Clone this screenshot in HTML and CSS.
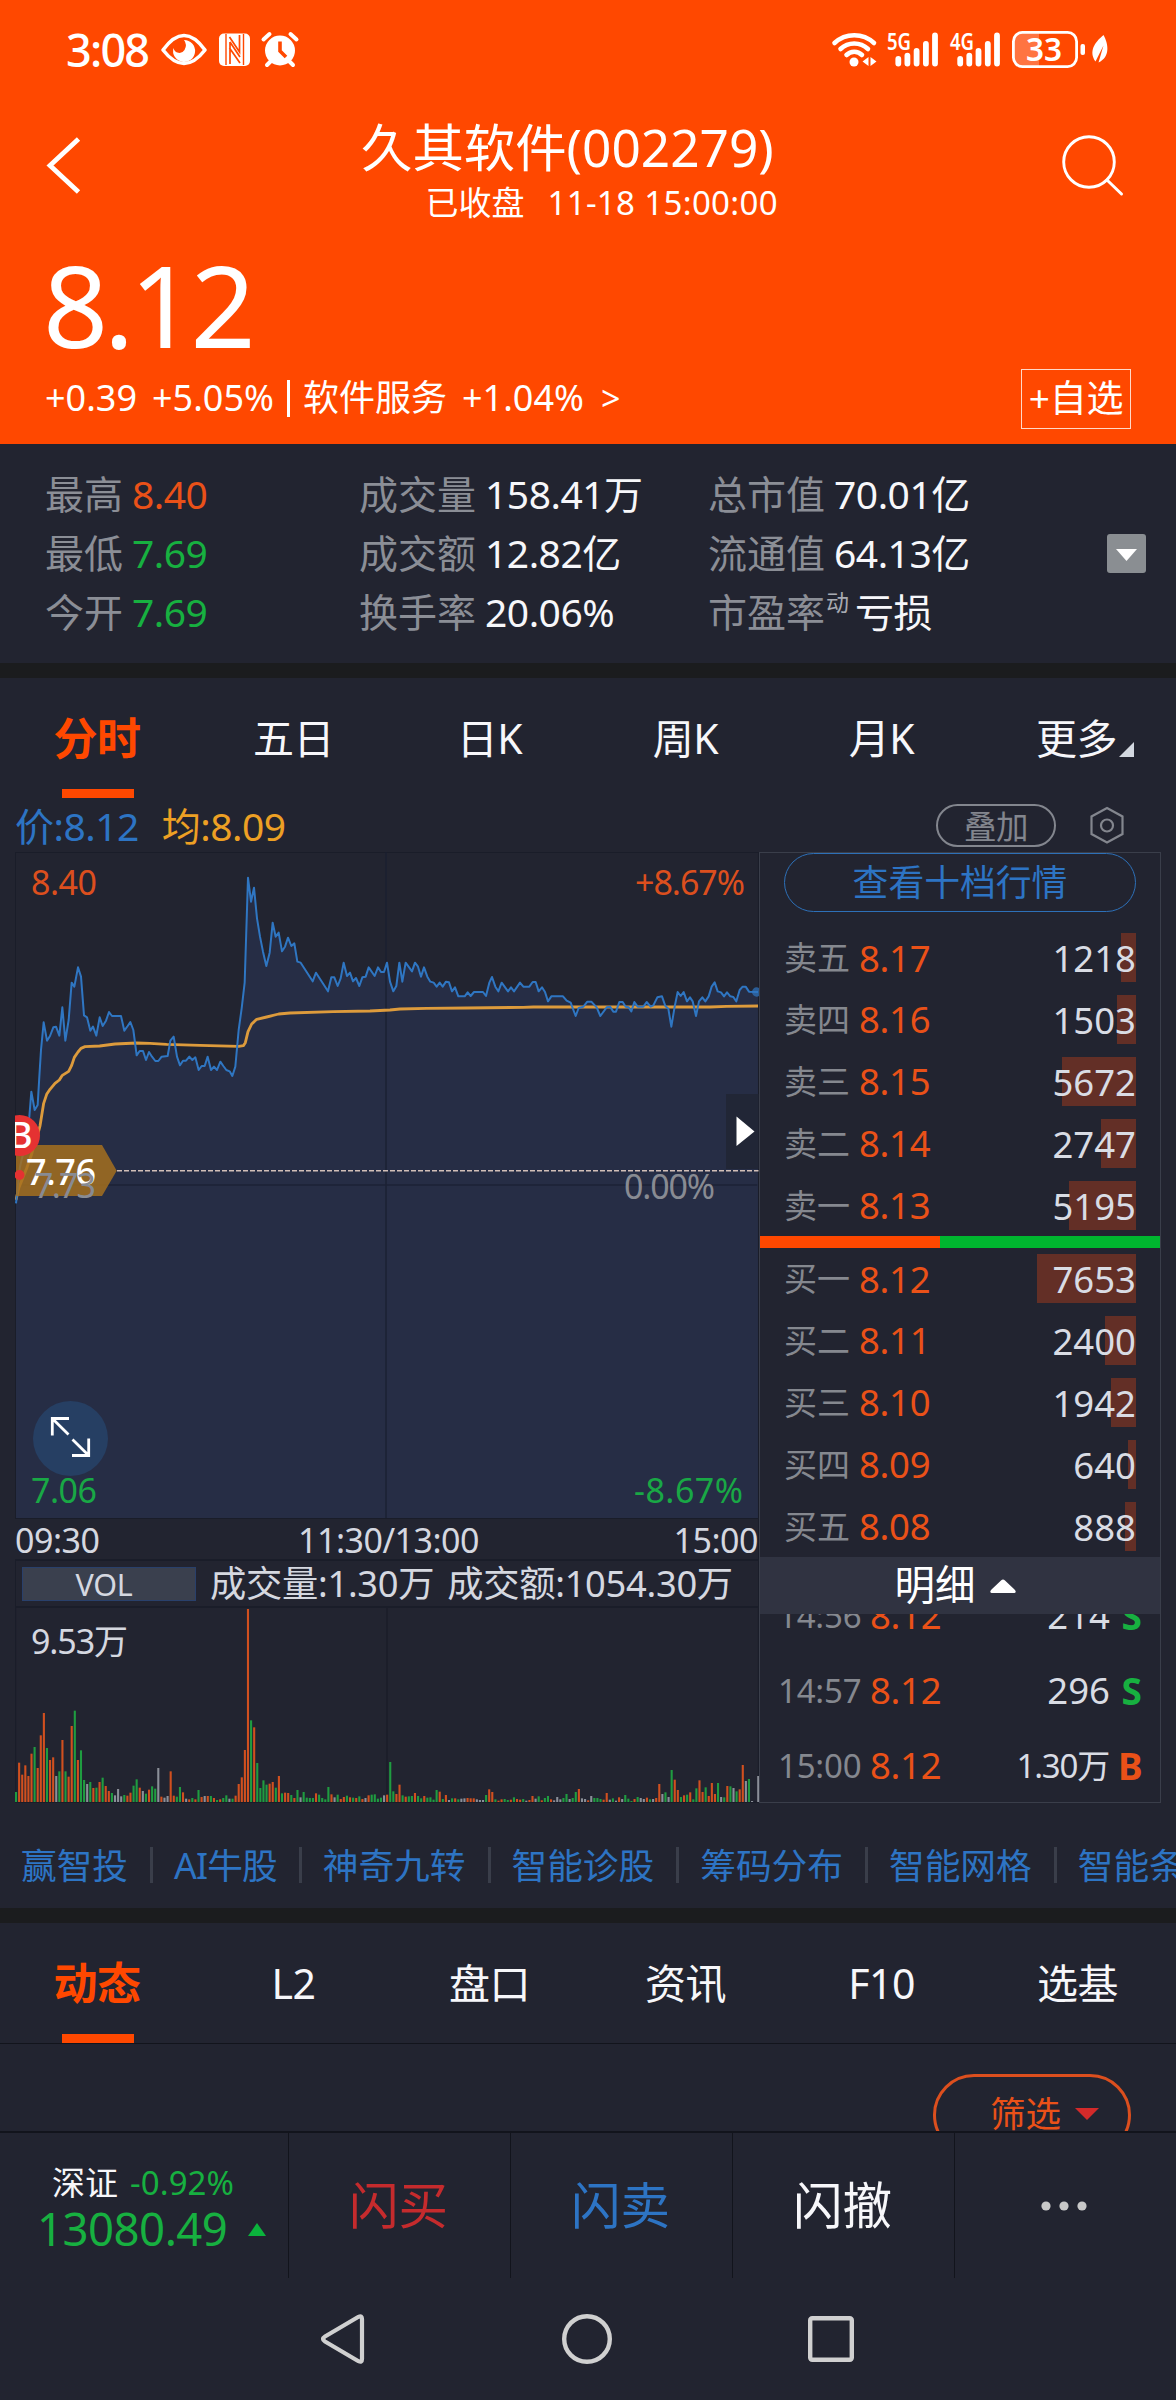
FILE: index.html
```html
<!DOCTYPE html>
<html lang="zh-CN">
<head>
<meta charset="utf-8">
<title>久其软件(002279)</title>
<link rel="stylesheet" href="styles.css">
</head>
<body>
<div class="app">
  <header class="hero">
    <div class="status">
      <span class="clock">3:08</span>
      <svg class="status-left" width="140" height="40" viewBox="160 30 140 40">
        <path d="M163 50Q184 21 205 50Q184 77 163 50Z" fill="none" stroke="#fff" stroke-width="3.6" stroke-linejoin="round"/>
        <path d="M184 40a11 11 0 1 1-10.500 8a6 6 0 0 0 11 2a9 9 0 0 0-0.500-10Z" fill="#fff"/>
        <rect x="219" y="33.500" width="31" height="32.500" rx="5" fill="#fff"/>
        <path d="M226 34v31M243.500 34v31" stroke="#ff4800" stroke-width="1.400"/>
        <path d="M229.500 37l10 15v-17M240 63l-10.500-15M230 42v22M230 42l10 15" fill="none" stroke="#ff4800" stroke-width="1.700"/>
        <circle cx="280" cy="50.500" r="15" fill="#fff"/>
        <path d="M263.500 39.500l6-5.500M296.500 39.500l-6-5.500M271 61l-4 4M289 61l4 4" stroke="#fff" stroke-width="4" stroke-linecap="round"/>
        <path d="M280 41.500v9.500l6 6" fill="none" stroke="#ff4800" stroke-width="3.600"/>
      </svg>
      <svg class="status-right" width="280" height="40" viewBox="830 30 280 40">
        <g fill="none" stroke="#fff" stroke-width="4.600" stroke-linecap="round">
          <path d="M834.500 43a29 29 0 0 1 39.500 0M840.500 49a20 20 0 0 1 27.500 0M846.500 55a11 11 0 0 1 15.500 0"/>
        </g>
        <circle cx="854" cy="62" r="4.500" fill="#fff"/>
        <path d="M868.500 57v9l-6-4.500zM870.500 57v9l6-4.500z" fill="#fff"/>
        <g stroke="#fff" stroke-width="5.800" stroke-linecap="round">
          <path d="M898.300 59v4.500M907.400 55.600v7.900M916.600 51v12.500M925.900 44v19.500M935 35.500v28"/>
          <path d="M960.200 59v4.500M969.300 55.600v7.900M978.500 51v12.500M987.800 44v19.500M997 35.500v28"/>
        </g>
        <text x="887" y="50" class="net" textLength="24" lengthAdjust="spacingAndGlyphs">5G</text>
        <text x="950" y="50" class="net" textLength="24" lengthAdjust="spacingAndGlyphs">4G</text>
        <path d="M1022 33h17v33h-17a8 8 0 0 1-8-8v-17a8 8 0 0 1 8-8z" fill="#ff7441"/>
        <rect x="1013.400" y="32.400" width="63.200" height="34.200" rx="9" fill="none" stroke="#fff" stroke-width="2.800"/>
        <rect x="1080.500" y="44" width="4.500" height="11" rx="2" fill="#fff"/>
        <text x="1026" y="61" class="battery" textLength="36" lengthAdjust="spacingAndGlyphs">33</text>
        <path d="M1103.500 35c5 9 7 22-5 27.500l5-17-8 16c-7-10-1-19 8-26.500z" fill="#fff"/>
      </svg>
    </div>
    <div class="titlebar">
      <svg width="40" height="60" viewBox="44 135 40 60"><path d="M78.500 139L50 165.500L78.500 192" fill="none" stroke="#fff" stroke-width="4.800"/></svg>
      <div class="titles">
        <h1>久其软件(002279)</h1>
        <p><span>已收盘</span><span class="stamp">11-18 15:00:00</span></p>
      </div>
      <svg width="64" height="64" viewBox="1060 133 64 64"><circle cx="1089" cy="162" r="25.300" fill="none" stroke="#fff" stroke-width="2.900"/><path d="M1107 180l14.500 14" stroke="#fff" stroke-width="3" stroke-linecap="round"/></svg>
    </div>
    <div class="price">8.12</div>
    <div class="change">
      <span>+0.39</span><span class="pct">+5.05%</span><i class="bar"></i><span class="sector">软件服务</span><span class="sector-pct">+1.04%</span><span class="gt">&gt;</span>
      <button class="add">+自选</button>
    </div>
  </header>

  <section class="quote">
    <dl class="c1"><div><dt>最高</dt><dd class="up">8.40</dd></div><div><dt>最低</dt><dd class="down">7.69</dd></div><div><dt>今开</dt><dd class="down">7.69</dd></div></dl>
    <dl class="c2"><div><dt>成交量</dt><dd>158.41万</dd></div><div><dt>成交额</dt><dd>12.82亿</dd></div><div><dt>换手率</dt><dd>20.06%</dd></div></dl>
    <dl class="c3"><div><dt>总市值</dt><dd>70.01亿</dd></div><div><dt>流通值</dt><dd>64.13亿</dd></div><div><dt>市盈率<sup>动</sup></dt><dd class="tight">亏损</dd></div></dl>
    <svg class="more" width="39" height="39" viewBox="0 0 39 39"><rect width="39" height="39" rx="3" fill="#8a8e92"/><path d="M9 15h21L19.500 27z" fill="#fff"/></svg>
  </section>

  <nav class="tabs">
    <a class="on">分时</a><a>五日</a><a>日K</a><a>周K</a><a>月K</a><a class="with-corner">更多<svg width="15" height="15" viewBox="0 0 15 15"><path d="M15 0v15H0z" fill="#d3d8e0"/></svg></a>
  </nav>

  <div class="legend">
    <span class="blue">价:8.12</span><span class="amber">均:8.09</span>
    <span class="overlay">叠加</span>
    <svg width="36" height="42" viewBox="0 0 36 42"><path d="M18 4l15.500 8.500v17.500l-15.500 8.500l-15.500-8.500v-17.500z" fill="none" stroke="#83868e" stroke-width="2.200"/><circle cx="18" cy="21.500" r="6" fill="none" stroke="#83868e" stroke-width="2.200"/></svg>
  </div>

  <main class="market">
    <div class="charts">
      <svg class="minute" width="744" height="666" viewBox="15 852 744 666">
        <g transform="translate(0 830) scale(.333333)">
          <path id="area" fill="#262d45"/>
          <path d="M46 66V2064M46 67H2276M2276 66V2064" stroke="#1a1d29" stroke-width="4"/>
          <path d="M1158 66V2064M46 1065H2272" stroke="#1a1f30" stroke-width="5" opacity=".75"/>
          <path id="avg" fill="none" stroke="#dd9b3c" stroke-width="8.500" stroke-linejoin="round"/>
          <path id="line" fill="none" stroke="#2f76c2" stroke-width="6" stroke-linejoin="round"/>
          <circle cx="2270" cy="486" r="14" fill="#2f76c2" opacity=".7"/>
        </g>
        <path d="M726 1094h32.500v75H726z" fill="#212636"/>
        <path d="M736.500 1116.500v29.500L754.500 1131.500z" fill="#fff"/>
        <path d="M117 1170.700H758.500" stroke="#d2bfb8" stroke-width="1.400" stroke-dasharray="5 2"/>
        <path d="M16 1145H102L116.700 1170.700L102 1196H16z" fill="#a5701f" fill-opacity=".85"/>
        <circle cx="19.500" cy="1175" r="5" fill="#e53232"/>
        <circle cx="19.500" cy="1135.500" r="20.500" fill="#e53232"/>
        <text x="9" y="1148" class="mark">B</text>
        <text x="26" y="1185" class="cost" textLength="70">7.76</text>
        <text x="34" y="1198" class="axis mute" textLength="62">7.73</text>
        <text x="31" y="894.500" class="axis up" textLength="66">8.40</text>
        <text x="635" y="894.500" class="axis up" textLength="110">+8.67%</text>
        <text x="624" y="1198.500" class="axis mute" textLength="91">0.00%</text>
        <circle cx="70.500" cy="1438.500" r="37.500" fill="#263f63"/>
        <path d="M69 1418.500H52.300V1435.500M52.300 1418.500L68.500 1434.500M72 1455.500H88.700V1438.500M88.700 1455.500L72.500 1439.500" fill="none" stroke="#fff" stroke-width="2.800"/>
        <text x="31" y="1502.500" class="axis down" textLength="66">7.06</text>
        <text x="634" y="1502.500" class="axis down" textLength="109">-8.67%</text>
      </svg>
      <div class="times"><span>09:30</span><span>11:30/13:00</span><span>15:00</span></div>
      <div class="volbar"><b>VOL</b><span>成交量:1.30万</span><span>成交额:1054.30万</span></div>
      <svg class="volume" width="744" height="195" viewBox="15 1608 744 195">
        <path d="M15.500 1608V1803M387 1608V1802M758.500 1608V1803M15 1802.300H759" stroke="#1a1d29" stroke-width="1.400"/>
        <g id="bars"></g>
        <text x="31" y="1653.500" class="axis pale" textLength="97">9.53万</text>
      </svg>
    </div>
    <aside class="book">
      <div class="ten">查看十档行情</div>
      <ul class="levels">
        <li><em>卖五</em><b>8.17</b><span><i style="width:15px"></i>1218</span></li>
        <li><em>卖四</em><b>8.16</b><span><i style="width:19px"></i>1503</span></li>
        <li><em>卖三</em><b>8.15</b><span><i style="width:74px"></i>5672</span></li>
        <li><em>卖二</em><b>8.14</b><span><i style="width:35px"></i>2747</span></li>
        <li><em>卖一</em><b>8.13</b><span><i style="width:67px"></i>5195</span></li>
      </ul>
      <div class="ratio"><i></i></div>
      <ul class="levels">
        <li><em>买一</em><b>8.12</b><span><i style="width:99px"></i>7653</span></li>
        <li><em>买二</em><b>8.11</b><span><i style="width:31px"></i>2400</span></li>
        <li><em>买三</em><b>8.10</b><span><i style="width:25px"></i>1942</span></li>
        <li><em>买四</em><b>8.09</b><span><i style="width:8px"></i>640</span></li>
        <li><em>买五</em><b>8.08</b><span><i style="width:11px"></i>888</span></li>
      </ul>
      <div class="detail">明细<svg width="26" height="14" viewBox="0 0 26 14"><path d="M1.500 14Q-1 13 1.500 10.500L11 1.500Q13-.5 15 1.500L24.500 10.500Q27 13 24.500 14z" fill="#fff"/></svg></div>
      <ul class="trades">
        <li><em>14:56</em><b>8.12</b><span>214</span><strong class="down">S</strong></li>
        <li><em>14:57</em><b>8.12</b><span>296</span><strong class="down">S</strong></li>
        <li><em>15:00</em><b>8.12</b><span class="wan">1.30万</span><strong class="up">B</strong></li>
      </ul>
    </aside>
  </main>

  <nav class="links"><a>赢智投</a><a class="ai">AI牛股</a><a>神奇九转</a><a>智能诊股</a><a>筹码分布</a><a>智能网格</a><a>智能条件单</a></nav>

  <nav class="tabs news">
    <a class="on">动态</a><a>L2</a><a>盘口</a><a>资讯</a><a>F10</a><a>选基</a>
  </nav>

  <div class="filter"><div class="pill">筛选<svg width="24" height="12" viewBox="0 0 24 12"><path d="M0 0h24L12 12z" fill="#d42a2a"/></svg></div></div>

  <footer class="actions">
    <div class="index">
      <p><span>深证</span><span class="down">-0.92%</span></p>
      <p class="points down"><span>13080.49</span><svg width="18" height="13" viewBox="0 0 18 13"><path d="M9 0l9 13H0z" fill="#0bb33c"/></svg></p>
    </div>
    <a class="buy">闪买</a><a class="sell">闪卖</a><a>闪撤</a>
    <a><svg width="48" height="10" viewBox="0 0 48 10" fill="#c8c8c8"><circle cx="5" cy="5" r="4.600"/><circle cx="23" cy="5" r="4.600"/><circle cx="41" cy="5" r="4.600"/></svg></a>
  </footer>

  <div class="sysnav">
    <svg width="50" height="54" viewBox="0 0 50 54"><path d="M7 24.500L40.500 4.800Q44 3 44 7V47Q44 51 40.500 49.200L7 29.500Q3 27 7 24.500z" fill="none" stroke="#d0d0d0" stroke-width="4.200"/></svg>
    <svg width="50" height="54" viewBox="0 0 50 54"><circle cx="25" cy="27" r="22.800" fill="none" stroke="#d0d0d0" stroke-width="4.400"/></svg>
    <svg width="50" height="54" viewBox="0 0 50 54"><rect x="4.200" y="6.200" width="41.600" height="41.600" rx="2" fill="none" stroke="#d0d0d0" stroke-width="4.400"/></svg>
  </div>
</div>
<script src="chart.js"></script>
</body>
</html>
```
FILE: styles.css
```css
* { box-sizing: border-box; margin: 0; padding: 0; }

body {
  background: #222430;
  color: #f7f7fa;
  font-family: "Noto Sans", "Noto Sans CJK SC", sans-serif;
  font-size: 36px;
  line-height: 1;
}

svg { display: block; flex: none; }
ul { list-style: none; }
em, i { font-style: normal; }
.app { width: 1176px; height: 2400px; overflow: hidden; display: flex; flex-direction: column; }
.app > * { flex: none; }

.up { color: #ea5118; fill: #dc4f1e; }
.down { color: #17b040; fill: #19a845; }

/* header */
.hero { height: 444px; background: #ff4800; color: #fff; }
.status { height: 100px; padding: 0 66px; display: flex; align-items: center; }
.clock { width: 94px; font-size: 45px; letter-spacing: -1.800px; font-weight: 500; line-height: 100px; }
.status-right { margin-left: auto; overflow: visible; }
.net { font-size: 24px; font-weight: 600; fill: #fff; }
.battery { font-size: 33px; font-weight: 600; fill: #fff; }

.titlebar { height: 136px; padding: 0 52px 0 44px; display: flex; align-items: flex-start; }
.titlebar > svg { margin-top: 35px; }
.titlebar > svg:last-child { margin-top: 33px; margin-left: auto; }
.titles { width: 420px; margin-left: 277px; padding-top: 15px; }
.titles h1 { font-size: 51.400px; line-height: 64px; font-weight: 400; white-space: nowrap; }
.titles p { display: flex; justify-content: flex-end; gap: 23px; padding-right: 3px; margin-top: 6px; font-size: 33px; line-height: 36px; white-space: nowrap; }
.stamp { letter-spacing: .35px; }

.price { height: 134px; padding-left: 43px; font-size: 114px; line-height: 135px; letter-spacing: -4.500px; }
.change { height: 74px; padding: 0 45px; margin-top: -9px; display: flex; align-items: center; white-space: nowrap; }
.pct { margin-left: 15px; }
.bar { width: 3px; height: 37px; background: #fff; margin: 0 13px; }
.sector { font-size: 36px; }
.sector-pct { margin-left: 15px; }
.gt { margin-left: 17px; font-size: 34px; }
.add { margin-left: auto; margin-top: 2px; width: 110px; height: 60px; border: 1.500px solid #ffd9c8; background: none; color: #fff; font: 37px/56px "Noto Sans", "Noto Sans CJK SC", sans-serif; letter-spacing: -.3px; white-space: nowrap; display: flex; justify-content: center; }

/* quote figures */
.quote { height: 219px; display: grid; grid-template-columns: 313px 350px 399px 1fr; padding: 20px 0 0 45px; font-size: 39px; }
.quote dl > div { display: flex; height: 59px; line-height: 59px; white-space: nowrap; gap: 9px; }
.quote dt { color: #8b8e96; }
.quote dd { letter-spacing: -.5px; }
.quote sup { font-size: 23px; line-height: 1; vertical-align: 16px; margin-left: 1px; color: #a7aab2; }
.quote .tight { margin-left: -3px; }
.quote .c2 { margin-left: 1px; }
.more { margin-top: 70px; }

/* tabs */
.tabs { height: 135px; border-top: 15px solid #1b1c1e; display: grid; grid-template-columns: repeat(6, 196px); font-size: 41px; line-height: 120px; text-align: center; }
.tabs a { display: flex; flex-direction: column; align-items: center; letter-spacing: -.5px; height: 120px; padding-right: 1px; }
.tabs .on { color: #ff4800; font-weight: 700; font-size: 44px; padding-right: 2px; }
.tabs .on::after { content: ""; width: 72px; height: 9px; background: #ff4800; margin-top: -9px; flex: none; margin-left: 2px; }
.tabs .with-corner { flex-direction: row; justify-content: center; padding-left: 15px; gap: 2px; }
.with-corner svg { margin-top: 23px; }
.news { height: 136px; border-bottom: 1px solid #12141c; }

.legend { height: 54px; padding: 0 51px 0 15px; display: flex; align-items: center; font-size: 39px; letter-spacing: -.5px; }
.blue { color: #2d74c4; }
.amber { color: #eda024; margin-left: 23px; }
.overlay { margin-left: auto; margin-right: 33px; width: 120px; height: 43px; border: 2px solid #83868e; border-radius: 22px; color: #83868e; font-size: 32.500px; line-height: 41px; text-align: center; }

/* chart + order book */
.market { height: 951px; padding: 0 15px; display: flex; }
.charts { width: 744px; }
.minute, .volume { overflow: hidden; }
.axis { font-size: 34px; }
.mute { fill: #888b93; }
.pale { fill: #d5d8e0; }
.cost { font-size: 36px; fill: #fff; font-weight: 500; }
.mark { font-size: 36px; fill: #fff; font-weight: 500; }
.times { height: 43px; display: flex; justify-content: space-between; line-height: 42px; font-size: 34px; color: #d5d8e0; border: solid #1a1d29; border-width: 1px 1px 2px 0; letter-spacing: -.5px; }
.times span:nth-child(2) { margin-left: 4px; }
.volbar { height: 47px; display: flex; align-items: center; border: solid #1a1d29; border-width: 0 1px 2px 1px; padding-left: 6px; color: #d5d8e0; font-size: 36.300px; letter-spacing: -.3px; white-space: nowrap; }
.volbar b { width: 174px; height: 34px; margin-right: 14px; padding-right: 10px; border: 1.500px solid #29406b; background: #3a404e; font-size: 30.500px; font-weight: 400; line-height: 32px; text-align: center; }
.volbar span + span { margin-left: 13px; }

.book { width: 402px; border: 1px solid #3a3e4a; display: flex; flex-direction: column; }
.ten { flex: none; margin: 0 24px; height: 59px; border: 1.500px solid #2d70b8; border-radius: 30px; color: #2d74c4; font-size: 35.800px; line-height: 57px; text-align: center; }
.levels { height: 309px; display: grid; grid-template-rows: repeat(5, 1fr); padding: 0 24px 0 24px; }
.ten + .levels { margin-top: 15px; }
.levels li { display: flex; align-items: center; }
.levels em { width: 75px; font-size: 33px; color: #85888f; }
.levels b, .trades b { font-weight: 400; font-size: 36.500px; letter-spacing: -.3px; color: #ea5118; }
.levels span { position: relative; margin-left: auto; height: 49px; line-height: 50px; font-size: 36.500px; color: #d9dce4; isolation: isolate; }
.levels span i { position: absolute; z-index: -1; right: 0; top: 0; height: 49px; background: #632f26; }
.ratio { height: 12px; background: #00b62f; }
.ratio i { display: block; width: 180px; height: 12px; background: #ff4800; }
.detail { height: 57px; background: #303341; display: flex; align-items: center; justify-content: center; gap: 14px; padding-right: 10px; font-size: 40.500px; color: #fff; }
.trades { flex: 1; overflow: hidden; padding: 0 18px; display: flex; flex-direction: column; justify-content: flex-end; }
.trades li { height: 75px; flex: none; display: flex; align-items: center; padding-top: 1px; }
.trades em { width: 92px; font-size: 33px; letter-spacing: -.2px; color: #85888f; }
.trades span { margin-left: auto; font-size: 36.500px; color: #d9dce4; }
.trades .wan { font-size: 33px; letter-spacing: -1.200px; margin-right: 1px; }
.trades strong { width: 24px; margin-left: 8px; font-size: 37px; text-align: right; }

/* shortcut links */
.links { height: 105px; padding: 18px 0 0 21px; display: flex; align-items: center; overflow: hidden; white-space: nowrap; font-size: 35.700px; color: #2d74c4; }
.links a { flex: none; line-height: 36px; padding-right: 22px; border-right: 3px solid #3a3e4a; margin-right: 21px; }
.links .ai { letter-spacing: -.9px; }

.filter { height: 87px; overflow: hidden; padding: 30px 45px 0 0; }
.pill { margin-left: auto; width: 198px; height: 82px; border: 3px solid #dc4f1e; border-radius: 41px; display: flex; align-items: center; gap: 14px; padding: 0 0 3px 54px; color: #ea5118; font-size: 35.500px; white-space: nowrap; }

/* bottom bar */
.actions { height: 147px; border-top: 2px solid #12141c; display: grid; grid-template-columns: 289px repeat(3, 222px) 221px; font-size: 49.500px; }
.actions > * { border-right: 1.500px solid #12141c; display: flex; justify-content: center; align-items: center; }
.actions > a { padding-right: 2px; }
.actions > :last-child { border-right: 0; }
.buy { color: #c52b2d; }
.sell { color: #2d74c4; }
.index { flex-direction: column; padding-left: 37px; }
.actions > .index { align-items: flex-start; }
.index p { display: flex; align-items: center; font-size: 33px; line-height: 44px; white-space: nowrap; }
.index p:first-child { padding-left: 15px; gap: 12px; }
.index .points { font-size: 45.500px; line-height: 46px; letter-spacing: -.5px; }
.index p:first-child .down { letter-spacing: .1px; }
.points svg { margin: 3px 0 0 21px; }

.sysnav { height: 122px; display: flex; justify-content: center; gap: 194px; align-items: center; padding-right: 2px; }
```
FILE: chart.js
```js
// Minute prices and running average, in chart units (x, y pairs).
const price = "48,1120 60,1010 72,960 88,860 94,785 104,840 113,825 118,740 123,660 131,577 141,632 150,618 160,592 168,590 178,617 187,532 196,632 206,570 215,458 223,470 234,412 243,440 252,556 261,562 271,602 279,590 289,617 299,562 308,588 318,572 327,546 336,558 363,558 373,602 383,588 391,576 400,600 410,676 419,663 429,663 438,690 447,666 456,680 466,693 475,693 485,680 503,678 511,632 521,620 531,680 540,706 549,692 558,692 568,680 577,690 586,682 596,720 605,708 614,708 623,680 633,720 642,710 651,720 661,695 670,708 679,720 689,724 697,738 706,710 716,600 725,535 734,458 744,143 753,215 762,173 771,265 780,320 789,365 799,408 809,368 818,278 827,320 836,308 846,364 855,350 864,323 874,348 883,340 892,395 902,398 938,454 948,428 984,484 994,442 1003,442 1013,468 1022,445 1031,398 1041,438 1050,428 1059,454 1068,444 1078,468 1087,442 1097,440 1106,412 1124,438 1134,412 1143,426 1152,426 1161,398 1170,455 1180,484 1189,468 1198,398 1207,455 1217,398 1236,424 1245,398 1254,410 1263,440 1272,412 1282,440 1291,455 1301,458 1310,470 1319,458 1328,470 1338,455 1347,457 1356,484 1365,472 1375,499 1394,499 1403,487 1412,498 1422,486 1449,486 1458,498 1468,458 1476,441 1486,470 1495,484 1505,458 1524,484 1533,472 1542,484 1560,458 1570,470 1588,470 1598,456 1607,456 1616,484 1626,472 1635,486 1644,514 1654,499 1689,499 1700,512 1712,518 1727,558 1736,534 1750,530 1762,515 1774,515 1790,532 1801,558 1820,532 1830,530 1840,545 1848,545 1858,516 1868,516 1877,530 1886,532 1894,544 1903,516 1913,530 1930,530 1940,516 1952,530 1960,526 1972,502 1986,499 1996,528 2005,536 2014,590 2024,530 2033,486 2042,498 2051,486 2061,514 2070,502 2078,514 2088,558 2097,514 2107,502 2116,514 2126,499 2135,470 2144,457 2153,484 2163,487 2172,499 2181,487 2191,499 2200,501 2209,514 2219,480 2228,470 2237,470 2247,485 2274,486";
const average = "48,1110 56,1075 68,1045 80,1015 94,975 104,940 113,915 120,888 131,820 140,793 150,778 165,760 178,750 187,736 206,724 215,706 223,682 234,666 243,655 255,650 299,648 345,642 410,639 450,640 500,643 600,646 716,649 730,647 736,638 744,605 755,582 770,568 800,561 836,552 870,549 1000,545 1110,543 1170,540 1200,537 1280,535 1400,534 1570,532 1600,531 2130,531 2180,529 2274,528";

document.getElementById("line").setAttribute("d", "M" + price);
document.getElementById("avg").setAttribute("d", "M" + average);
document.getElementById("area").setAttribute("d", "M" + price + " 2274,2064 48,2064Z");

// One entry per minute: bar height and direction (r up, g down, w flat).
const volume = "30g 118r 82r 110r 78r 145r 165g 102r 200r 267r 162g 126r 134r 78w 92g 186r 92g 76r 228r 274g 126r 155g 66g 54w 60g 42r 43g 60r 73g 48r 33r 27g 20w 39w 17w 21g 19r 28r 49g 68g 43r 33w 25g 37r 47g 40g 102w 16r 13w 18w 92r 19r 16g 45g 29r 10w 8r 12g 8r 36g 15r 18w 18r 18g 12r 6g 8r 12g 20g 10w 10g 19r 54r 74r 156r 579r 245g 224r 117g 42g 65g 52g 55r 60r 43g 78r 26g 28r 27r 21g 12r 36g 14w 30g 13g 12g 12g 26r 22g 12g 8g 45g 23r 14w 22g 9r 15r 19g 14r 13g 12r 17g 9r 12w 20r 22g 23g 10g 13g 20w 22r 120g 32g 24r 52r 20g 16r 17g 18g 27r 18g 11g 18r 13g 14g 7g 36g 31r 9g 21r 6w 11g 11r 8g 10w 11w 12r 11r 11r 8w 6w 6w 21g 38r 30r 8g 4r 8r 9g 6g 7r 14g 9r 7r 9g 4w 6r 18r 10w 17g 5r 12g 18g 8r 5w 15w 8w 12g 24g 9w 12g 30g 39r 11w 9w 5r 18w 12g 12g 9g 7r 27r 7w 11g 4w 14r 9w 21g 10g 3g 9r 15g 12w 9w 13r 8g 9w 12r 54r 24w 29g 15w 96g 67r 36r 15g 20r 22g 29r 8g 41g 65r 30r 44g 18r 57r 24r 57g 15w 14g 48r 47g 42w 32g 38r 111r 63w 69g 3w 0w 78w".split(" ");
const colors = { r: "#d1501f", g: "#1f9c40", w: "#8b8f98" };
const bars = document.getElementById("bars");
volume.forEach((entry, i) => {
  const h = parseInt(entry, 10) / 3;
  const bar = document.createElementNS("http://www.w3.org/2000/svg", "rect");
  bar.setAttribute("x", (15 + i * 3.0925).toFixed(2));
  bar.setAttribute("y", (1802 - h).toFixed(2));
  bar.setAttribute("width", 2.1);
  bar.setAttribute("height", h.toFixed(2));
  bar.setAttribute("fill", colors[entry.slice(-1)]);
  bars.appendChild(bar);
});
```
